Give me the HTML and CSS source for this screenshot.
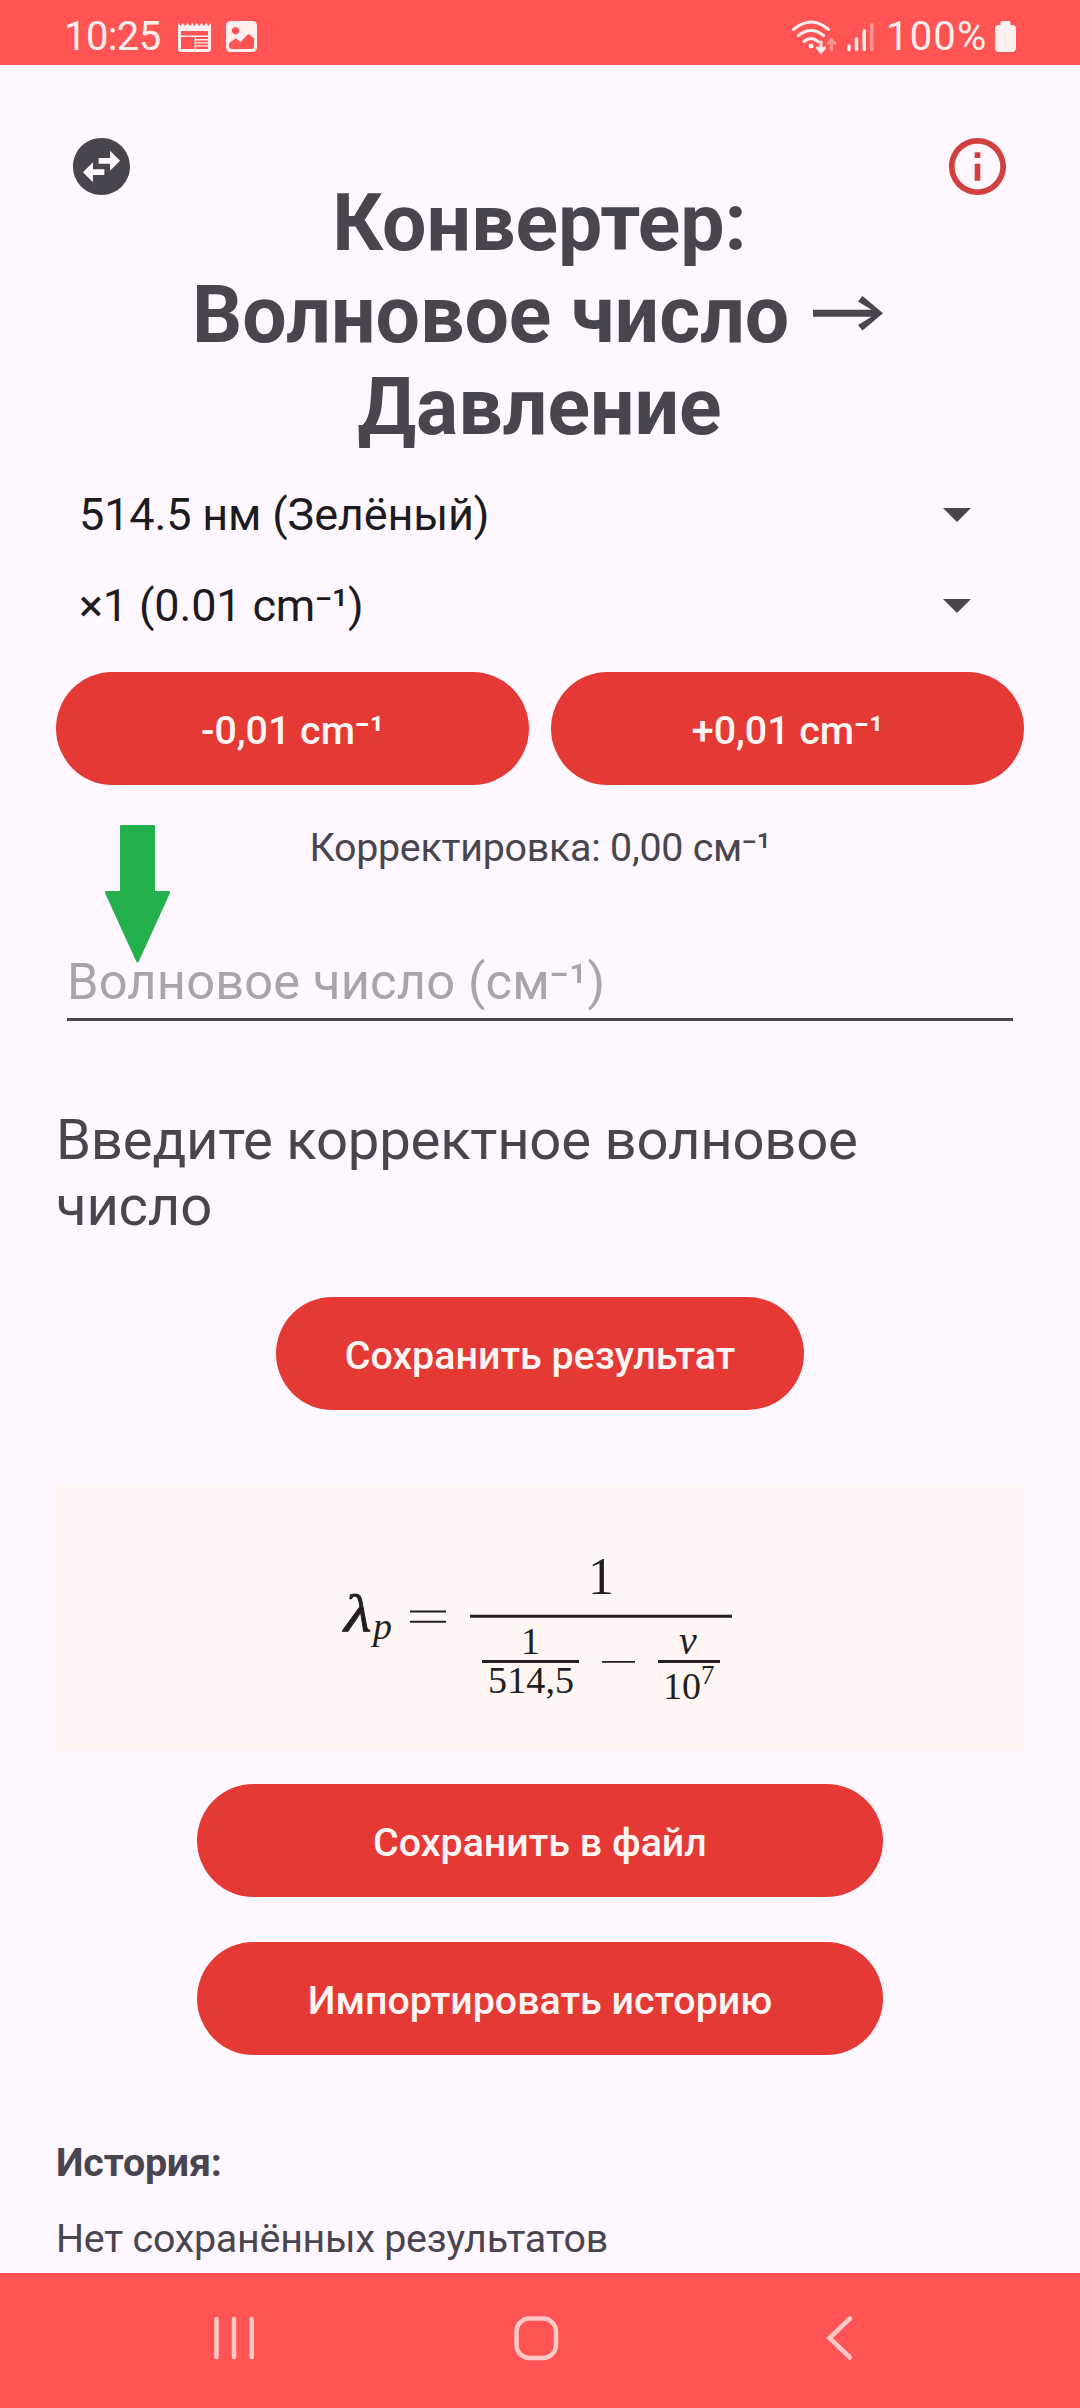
FILE: index.html
```html
<!DOCTYPE html>
<html lang="ru">
<head>
<meta charset="utf-8">
<title>Конвертер</title>
<link rel="stylesheet" href="styles.css">
</head>
<body>
<div class="screen">
  <div class="status-bar">
    <span class="clock">10:25</span>
    <svg class="calendar" width="33" height="31" viewBox="0 0 33 31">
      <path fill="currentColor" fill-rule="evenodd" d="M0 2l2.500 3 2.300-3 2.400 3 2.300-3 2.400 3 2.300-3 2.300 3 2.300-3 2.400 3 2.300-3 2.400 3 2.300-3 2.300 3L33 2v26q0 3-3 3H3q-3 0-3-3zM3 10v4.500h27V10zM3 16v12h13.500V16zM18 16v2h12v-2zM18 19.500v1.700h12v-1.700zM18 22.500v1.700h12v-1.700zM18 25.500v2.500h12v-2.500z"/>
    </svg>
    <svg class="photo" width="31" height="31" viewBox="0 0 31 31">
      <path fill="currentColor" fill-rule="evenodd" d="M5 0h21q5 0 5 5v21q0 5-5 5H5q-5 0-5-5V5q0-5 5-5zM9.500 6a3.700 3.700 0 1 0 .01 0zM3 22.500V25q0 3 3 3h19q3 0 3-3v-7.500l-4.500-4q-1-.8-2 .2L14.500 21l-4-3q-1-.8-2 0z"/>
    </svg>
    <svg class="wifi" width="46" height="34" viewBox="0 0 46 34" fill="none" stroke="currentColor" stroke-width="3" stroke-linecap="round">
      <path d="M2.500 9.500Q20 -5.500 37.500 9.500M7.500 15.500Q20 5.500 32.500 15.500M13 21.500Q20 15.500 27 21.500"/>
      <circle cx="20" cy="26" r="2.500" fill="currentColor" stroke="none"/>
      <path d="M30 22v9M26.500 28l3.500 4 3.500-4"/>
      <path opacity=".4" d="M40.500 30v-9M37 23.500l3.500-4 3.500 4"/>
    </svg>
    <svg class="signal" width="27" height="30" viewBox="0 0 27 30" stroke="currentColor" stroke-width="3.500" stroke-linecap="round">
      <path d="M2 24v3.500M9.500 17v10.500M17.200 9v18.500"/>
      <path opacity=".4" d="M24.800 2.500v25"/>
    </svg>
    <span class="charge">100%</span>
    <svg class="battery" width="21" height="31" viewBox="0 0 21 31">
      <path fill="currentColor" d="M7 0h7q1.500 0 1.500 1.500V4H17q4 0 4 4v19q0 4-4 4H4q-4 0-4-4V8q0-4 4-4h1.500V1.500Q5.500 0 7 0z"/>
    </svg>
  </div>

  <main class="content">
    <header class="header">
      <svg class="swap" width="57" height="57" viewBox="2 2 20 20">
        <path fill="currentColor" d="M22 12c0-5.520-4.480-10-10-10S2 6.480 2 12s4.480 10 10 10 10-4.480 10-10zm-7-5.500l3.500 3.500-3.500 3.500V11h-4V9h4V6.500zm-6 11L5.500 14 9 10.500V13h4v2H9v2.500z"/>
      </svg>
      <h1 class="title">Конвертер:<br>Волновое число <svg class="to" role="img" aria-label="→" width="70" height="35" viewBox="0 0 70 35"><path fill="currentColor" d="M0 13.700h58.500L45 5.500 49.500 0 70 17.300 49.500 34.600 45 29l13.500-8.200H0z"/></svg><br>Давление</h1>
      <svg class="info" width="57" height="57" viewBox="2 2 20 20">
        <path fill="currentColor" d="M11 7h2v2h-2zm0 4h2v6h-2zm1-9C6.480 2 2 6.480 2 12s4.480 10 10 10 10-4.480 10-10S17.520 2 12 2zm0 18c-4.410 0-8-3.590-8-8s3.590-8 8-8 8 3.590 8 8-3.590 8-8 8z"/>
      </svg>
    </header>

    <div class="select"><span>514.5 нм (Зелёный)</span><i class="caret"></i></div>
    <div class="select"><span>×1 (0.01 cm⁻¹)</span><i class="caret"></i></div>

    <div class="steps">
      <button class="button">-0,01 cm⁻¹</button>
      <button class="button">+0,01 cm⁻¹</button>
    </div>

    <p class="correction">Корректировка: 0,00 см⁻¹</p>

    <div class="field">
      <span class="placeholder">Волновое число (см⁻¹)</span>
      <svg class="pointer" width="65" height="138" viewBox="0 0 65 138">
        <path fill="#24b14d" d="M16 0h33q1 0 1 1v65h14q1.500 0 1 2L34 136q-1.500 3-3 0L0 68q-.5-2 1-2h14V1q0-1 1-1z"/>
      </svg>
    </div>

    <p class="result">Введите корректное волновое число</p>
    <button class="button save">Сохранить результат</button>

    <div class="formula">
      <svg width="440" height="200" viewBox="0 0 440 200" fill="#231f1e">
        <g class="math">
          <text class="it lambda" transform="translate(24 101) scale(1.2 1)" font-size="53">λ</text>
          <text class="it" x="53" y="109" font-size="38">p</text>
          <text x="268" y="64" font-size="52">1</text>
          <text x="201" y="124" font-size="38">1</text>
          <text x="168" y="163" font-size="38" textLength="86">514,5</text>
          <text class="it" x="359" y="124" font-size="40">ν</text>
          <text x="343" y="169" font-size="38">10</text>
          <text x="381" y="154" font-size="27">7</text>
        </g>
        <path d="M90 80.500h36v2H90zM90 90.700h36v2H90zM150 84.800h262v3H150zM162 130h97v3h-97zM282 131h33v1.800h-33zM338 130h62v3h-62z"/>
      </svg>
    </div>

    <button class="button wide">Сохранить в файл</button>
    <button class="button wide import">Импортировать историю</button>

    <h2 class="history-title">История:</h2>
    <p class="history">Нет сохранённых результатов</p>
  </main>

  <nav class="nav-bar">
    <svg width="40" height="48" viewBox="0 0 40 48" stroke="currentColor" stroke-width="4.500" stroke-linecap="round"><path d="M2.500 5v38M20 5v38M37.700 5v38"/></svg>
    <svg class="home" width="48" height="48" viewBox="0 0 48 48" fill="none" stroke="currentColor" stroke-width="4.500"><rect x="4.500" y="4.500" width="39.500" height="39.500" rx="13"/></svg>
    <svg class="back" width="28" height="48" viewBox="0 0 28 48" fill="none" stroke="currentColor" stroke-width="4.500" stroke-linecap="round"><path d="M24 4.500L3.500 24 24 43.500"/></svg>
  </nav>
</div>
</body>
</html>
```
FILE: styles.css
```css
* { box-sizing: border-box; }

body {
  margin: 0;
  background: #fef7ff;
  color: #49454f;
  font-family: Roboto, "Noto Sans", sans-serif;
}

h1, h2, p { margin: 0; }

svg { display: block; flex: none; }

.screen {
  display: flex;
  flex-direction: column;
  width: 1080px;
  height: 2408px;
  overflow: hidden;
}

.status-bar {
  display: flex;
  align-items: center;
  height: 65px;
  padding: 8px 64px 0 64px;
  background: #ff5354;
  color: #fff0ee;
  font-size: 40px;
  line-height: 48px;
}

.clock { width: 98px; letter-spacing: -0.6px; }
.calendar { margin-left: 16px; }
.photo { margin-left: 15px; }
.wifi { margin-left: auto; }
.signal { margin-left: 10px; }
.charge { width: 105px; margin-left: 12px; letter-spacing: 1.2px; }
.battery { margin-left: 4px; }

.content {
  display: flex;
  flex-direction: column;
  align-items: center;
  flex: 1;
  padding: 73px 56px 0;
}

.header {
  display: flex;
  align-items: flex-start;
  justify-content: space-between;
  width: 932px;
}

.swap { margin-left: -1px; }
.info { color: #d0403f; }

.title {
  margin-top: 39px;
  font-size: 78.75px;
  line-height: 92px;
  font-weight: 700;
  text-align: center;
  white-space: nowrap;
}

.to {
  display: inline-block;
  margin: 0 4px;
  vertical-align: 11px;
}

.select {
  display: flex;
  align-items: center;
  justify-content: space-between;
  width: 100%;
  height: 91px;
  padding: 0 53px 0 23px;
  color: #1d1b20;
  font-size: 45px;
  letter-spacing: -0.15px;
}

.header + .select { margin-top: 16px; }

.caret {
  border: 14px solid transparent;
  border-top-color: #49454f;
  border-bottom: 0;
}

.steps {
  display: flex;
  gap: 22px;
  width: 100%;
  margin-top: 21px;
}

.steps .button { flex: 1; }

.button {
  flex: none;
  height: 113px;
  padding: 3px 0 0;
  border: 0;
  border-radius: 57px;
  background: #e53935;
  color: #fff6f4;
  font-family: inherit;
  font-size: 39.375px;
  font-weight: 500;
}

.correction {
  margin-top: 40px;
  font-size: 39.375px;
  line-height: 46px;
  letter-spacing: -0.24px;
}

.field {
  position: relative;
  width: 946px;
  height: 69px;
  margin-top: 81px;
  border-bottom: 3px solid #49454f;
  color: #a9a4a9;
  font-size: 50.6px;
  line-height: 59px;
  letter-spacing: 0.18px;
}

/* hint arrow floats above the input */
.pointer {
  position: absolute;
  left: 38px;
  top: -127px;
}

.result {
  width: 100%;
  margin-top: 86px;
  font-size: 56.25px;
  line-height: 66px;
  letter-spacing: -0.22px;
}

.save { width: 528px; margin-top: 58px; }

.formula {
  display: flex;
  justify-content: center;
  width: 100%;
  height: 266px;
  margin-top: 74px;
  padding-top: 46px;
  background: #fff5f3;
}

.math { font-family: "Liberation Serif", serif; }
.it { font-style: italic; }
.lambda { stroke: #231f1e; stroke-width: 0.8px; }

.wide { width: 686px; margin-top: 34px; }
.import { margin-top: 45px; }

.history-title {
  width: 100%;
  margin-top: 85px;
  font-size: 39.375px;
  line-height: 46px;
  letter-spacing: -0.2px;
}

.history {
  width: 100%;
  margin-top: 30px;
  font-size: 39.375px;
  line-height: 46px;
  letter-spacing: -0.23px;
}

.nav-bar {
  display: flex;
  align-items: flex-start;
  height: 135px;
  padding: 41px 0 0 214px;
  background: #ff5354;
  color: #ffc9c8;
}

.home { margin-left: 258px; }
.back { margin-left: 266px; }
```
